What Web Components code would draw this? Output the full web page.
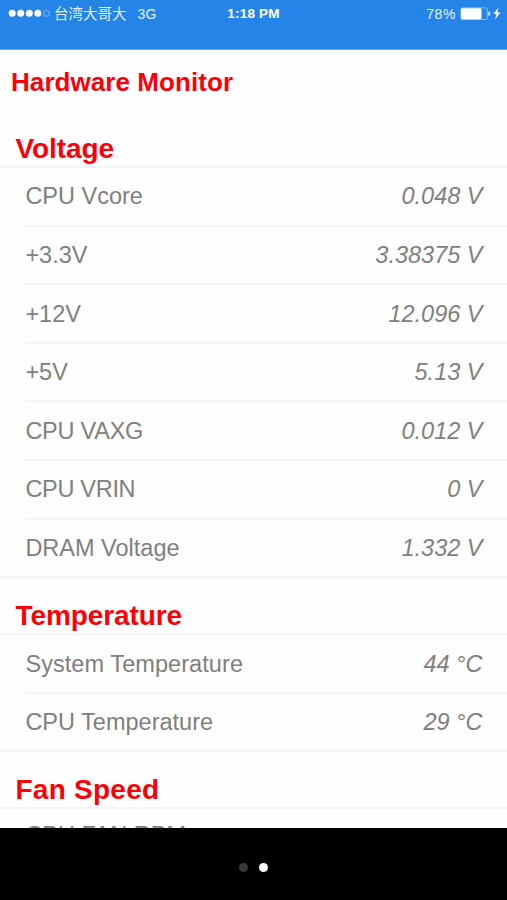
<!DOCTYPE html>
<html lang="en">
<head>
<meta charset="utf-8">
<title>Hardware Monitor</title>
<style>
    body {
        margin: 0;
        overflow: hidden;
        font-family: "Liberation Sans", "Noto Sans CJK TC", sans-serif;
    }
</style>
</head>
<body>
<monitor-app>
    <status-bar slot="status" carrier="台湾大哥大" network="3G" time="1:18 PM" battery="78%"></status-bar>
    <span slot="title">Hardware Monitor</span>
    <sensor-group name="Voltage">
        <sensor-row name="CPU Vcore">0.048 V</sensor-row>
        <sensor-row name="+3.3V">3.38375 V</sensor-row>
        <sensor-row name="+12V">12.096 V</sensor-row>
        <sensor-row name="+5V">5.13 V</sensor-row>
        <sensor-row name="CPU VAXG" style="--name-spacing: -0.25px">0.012 V</sensor-row>
        <sensor-row name="CPU VRIN" style="--name-spacing: -0.3px">0 V</sensor-row>
        <sensor-row name="DRAM Voltage">1.332 V</sensor-row>
    </sensor-group>
    <sensor-group name="Temperature">
        <sensor-row name="System Temperature" style="--name-spacing: 0.07px">44 °C</sensor-row>
        <sensor-row name="CPU Temperature">29 °C</sensor-row>
    </sensor-group>
    <sensor-group name="Fan Speed" style="--title-spacing: 0.25px">
        <sensor-row name="CPU FAN RPM" style="--row-top: 11.5px"></sensor-row>
    </sensor-group>
    <page-dots slot="pager" count="2" current="1"></page-dots>
</monitor-app>

<script>
const appTemplate = document.createElement('template');
appTemplate.innerHTML = `
<style>
    :host {
        display: flex;
        flex-direction: column;
        height: 900px;
        background: #fefefe;
    }
    h1 {
        margin: 0;
        box-sizing: border-box;
        height: 72px;
        padding: 16px 0 0 11px;
        font-size: 26px;
        line-height: 32px;
        font-weight: 700;
        letter-spacing: 0.07px;
        color: #fb0007;
    }
    main {
        flex: 1;
        min-height: 0;
        overflow: hidden;
    }
</style>
<slot name="status"></slot>
<main>
    <h1><slot name="title"></slot></h1>
    <slot></slot>
</main>
<slot name="pager"></slot>
`;

class MonitorApp extends HTMLElement {
    constructor() {
        super();
        this.attachShadow({ mode: 'open' });
        this.shadowRoot.appendChild(appTemplate.content.cloneNode(true));
    }
}

const statusTemplate = document.createElement('template');
statusTemplate.innerHTML = `
<style>
    :host {
        display: grid;
        grid-template-columns: 1fr auto 1fr;
        align-items: start;
        box-sizing: border-box;
        height: 50px;
        padding: 5px 6px 0 8px;
        background: #2484e8;
        border-bottom: 1px solid #65a9ef;
        color: #e4f3ff;
        font-size: 14px;
        line-height: 18px;
        white-space: nowrap;
    }
    .left, .right {
        display: flex;
        align-items: center;
        height: 18px;
    }
    .right {
        justify-content: flex-end;
    }
    .carrier {
        margin-left: 4px;
        font-size: 14.5px;
    }
    .network {
        margin-left: 11px;
        letter-spacing: 0.3px;
    }
    .time {
        margin-right: 2px;
        font-weight: 700;
        font-size: 13.5px;
        letter-spacing: 0.2px;
        color: #fff;
    }
    .battery {
        letter-spacing: 0.6px;
        margin-right: 4px;
    }
    svg {
        display: block;
    }
</style>
<div class="left">
    <svg width="42" height="10" viewBox="0 0 42 10" fill="#fff">
        <circle cx="4.2" cy="4.3" r="3.5"/>
        <circle cx="12.7" cy="4.3" r="3.5"/>
        <circle cx="21.3" cy="4.3" r="3.5"/>
        <circle cx="29.8" cy="4.3" r="3.5"/>
        <circle cx="38.5" cy="4.3" r="3" fill="none" stroke="#8fc4fa" stroke-width="0.8"/>
    </svg>
    <span class="carrier"></span>
    <span class="network"></span>
</div>
<span class="time"></span>
<div class="right">
    <span class="battery"></span>
    <svg width="41" height="14" viewBox="0 0 41 14">
        <rect x="0.9" y="0.9" width="26.4" height="11.6" rx="1.5" fill="none" stroke="#8fc4fa" stroke-width="0.9"/>
        <rect x="1" y="1.2" width="20.5" height="11" rx="1" fill="#fff"/>
        <path d="M28.3 4.5v4.4c1.3-.3 2-1.1 2-2.2s-.7-1.9-2-2.2z" fill="#d8ecff"/>
        <path d="M38.3 .8l-4.9 6.3h3l-1.3 5.4 5.3-6.9h-3.1z" fill="#fff"/>
    </svg>
</div>
`;

class StatusBar extends HTMLElement {
    constructor() {
        super();
        this.attachShadow({ mode: 'open' });
        this.shadowRoot.appendChild(statusTemplate.content.cloneNode(true));
        ['carrier', 'network', 'time', 'battery'].forEach(key => {
            this.shadowRoot.querySelector('.' + key).textContent = this.getAttribute(key);
        });
    }
}

const groupTemplate = document.createElement('template');
groupTemplate.innerHTML = `
<style>
    :host {
        display: block;
    }
    h2 {
        margin: 0;
        box-sizing: border-box;
        height: 55px;
        padding: 21px 0 0 15.5px;
        font-size: 28px;
        line-height: 34px;
        font-weight: 700;
        letter-spacing: var(--title-spacing, -0.1px);
        color: #fb0007;
    }
    :host(:first-of-type) h2 {
        height: 44px;
        padding-top: 10px;
    }
    .rows {
        border-top: 2px solid #f5f5f5;
        border-bottom: 2px solid #f5f5f5;
    }
</style>
<h2></h2>
<div class="rows"><slot></slot></div>
`;

class SensorGroup extends HTMLElement {
    constructor() {
        super();
        this.attachShadow({ mode: 'open' });
        this.shadowRoot.appendChild(groupTemplate.content.cloneNode(true));
        this.shadowRoot.querySelector('h2').textContent = this.getAttribute('name');
    }
}

const rowTemplate = document.createElement('template');
rowTemplate.innerHTML = `
<style>
    :host {
        display: flex;
        justify-content: space-between;
        box-sizing: border-box;
        height: 58.6px;
        margin-left: 25px;
        padding: var(--row-top, 14.4px) 24.5px 0 0.4px;
        border-bottom: 2px solid #f5f5f5;
        font-size: 23.5px;
        line-height: 28px;
        color: #808080;
    }
    :host(:last-of-type) {
        height: 56.6px;
        border-bottom: none;
    }
    .name {
        letter-spacing: var(--name-spacing, 0);
    }
    .value {
        font-style: italic;
    }
</style>
<span class="name"></span>
<span class="value"><slot></slot></span>
`;

class SensorRow extends HTMLElement {
    constructor() {
        super();
        this.attachShadow({ mode: 'open' });
        this.shadowRoot.appendChild(rowTemplate.content.cloneNode(true));
        this.shadowRoot.querySelector('.name').textContent = this.getAttribute('name');
    }
}

const dotsTemplate = document.createElement('template');
dotsTemplate.innerHTML = `
<style>
    :host {
        display: flex;
        justify-content: center;
        align-items: center;
        gap: 11px;
        box-sizing: border-box;
        height: 72px;
        padding-top: 7px;
        background: #000;
    }
    i {
        width: 9px;
        height: 9px;
        border-radius: 50%;
        background: #3a3a3a;
    }
    i.on {
        background: #fff;
    }
</style>
`;

class PageDots extends HTMLElement {
    constructor() {
        super();
        this.attachShadow({ mode: 'open' });
        this.shadowRoot.appendChild(dotsTemplate.content.cloneNode(true));
        for (let i = 0; i < Number(this.getAttribute('count')); i++) {
            const dot = document.createElement('i');
            dot.classList.toggle('on', i === Number(this.getAttribute('current')));
            this.shadowRoot.appendChild(dot);
        }
    }
}

customElements.define('monitor-app', MonitorApp);
customElements.define('status-bar', StatusBar);
customElements.define('sensor-group', SensorGroup);
customElements.define('sensor-row', SensorRow);
customElements.define('page-dots', PageDots);
</script>
</body>
</html>
